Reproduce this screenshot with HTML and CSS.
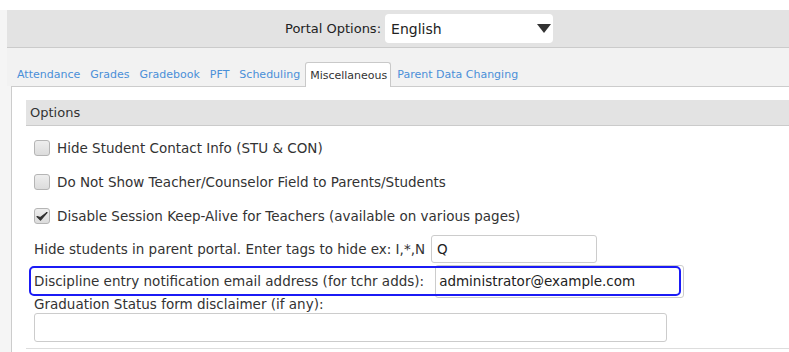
FILE: index.html
```html
<!DOCTYPE html>
<html lang="en">
<head>
  <meta charset="UTF-8">
  <title>Portal Options - Miscellaneous</title>
  <link rel="stylesheet" href="styles.css">
</head>
<body>
  <div class="page">
    <div class="portal-bar">
      <label class="portal-label" for="lang">Portal Options:</label>
      <div class="select">
        <span>English</span>
        <svg class="caret" width="14" height="9" viewBox="0 0 14 9"><path d="M0 0H14L7 9Z" fill="#333"/></svg>
      </div>
    </div>

    <div class="tabs">
      <a class="tab">Attendance</a>
      <a class="tab">Grades</a>
      <a class="tab">Gradebook</a>
      <a class="tab">PFT</a>
      <a class="tab">Scheduling</a>
      <a class="tab active">Miscellaneous</a>
      <a class="tab">Parent Data Changing</a>
    </div>

    <div class="content">
      <div class="section-head">Options</div>

      <div class="options">
        <div class="check-row"><span class="box"></span>Hide Student Contact Info (STU &amp; CON)</div>
        <div class="check-row"><span class="box"></span>Do Not Show Teacher/Counselor Field to Parents/Students</div>
        <div class="check-row"><span class="box checked"><svg width="12" height="10" viewBox="0 0 12 10"><path d="M1 5.5L4.5 9L11 1.5L4.5 6.5Z" fill="#333" stroke="#333" stroke-width="1.2" stroke-linejoin="round"/></svg></span>Disable Session Keep-Alive for Teachers (available on various pages)</div>

        <div class="field-row first">
          <span class="field-label">Hide students in parent portal. Enter tags to hide ex: I,*,N</span>
          <div class="input tags">Q</div>
        </div>

        <div class="field-row focused">
          <span class="field-label">Discipline entry notification email address (for tchr adds):</span>
          <div class="input email">administrator@example.com</div>
        </div>

        <div class="field-label grad">Graduation Status form disclaimer (if any):</div>
        <div class="input wide"></div>
      </div>
      <div class="section-foot"></div>
    </div>
  </div>
</body>
</html>
```

FILE: styles.css
```css
body {
  margin: 0;
  background-color: #fff;
  font-family: "DejaVu Sans", sans-serif;
  font-size: 13.5px;
  color: #333;
}
.page {
  margin-top: 10px;
  padding-left: 7px;
  background-color: #f5f5f5;
  height: 342px;
  overflow: hidden;
}
.portal-bar {
  height: 37px;
  background-color: #e3e3e3;
  border-bottom: 1px solid #cbcbcb;
  display: flex;
  align-items: center;
  gap: 4px;
  padding-left: 278px;
}
.portal-label {
  font-size: 13px;
  color: #222;
}
.select {
  width: 160px;
  height: 29px;
  background-color: #fff;
  border-radius: 4px;
  display: flex;
  align-items: center;
  justify-content: space-between;
  padding: 0 2px 0 6px;
  font-size: 14px;
  color: #222;
}
.tabs {
  background-color: #f2f2f2;
  height: 38px;
  display: flex;
  align-items: flex-end;
  padding-left: 5px;
}
.tab {
  color: #4a8fd8;
  font-size: 11px;
  padding: 0 5px 5px 5px;
  cursor: pointer;
}
.tab.active {
  color: #333;
  background-color: #fff;
  border: 1px solid #c9c9c9;
  border-bottom: none;
  border-radius: 3px 3px 0 0;
  padding: 6px 3px 5px 4px;
  margin: 0 1px -1px 0;
  position: relative;
}
.content {
  margin-left: 4px;
  background-color: #fff;
  border-left: 1px solid #cccccc;
  border-top: 1px solid #cccccc;
  padding: 13px 0 0 14px;
  height: 300px;
}
.section-head {
  height: 25px;
  background-color: #e3e3e3;
  border-bottom: 1px solid #cbcbcb;
  display: flex;
  align-items: center;
  padding-left: 4px;
  font-size: 13px;
}
.options {
  padding: 14px 0 0 8px;
  display: flex;
  flex-direction: column;
}
.check-row {
  display: flex;
  align-items: center;
  gap: 7px;
  height: 16px;
  margin-bottom: 18px;
}
.box {
  width: 16px;
  height: 16px;
  border: 1px solid #b5b5b5;
  border-radius: 3px;
  background: linear-gradient(#eeeeee, #dcdcdc);
  display: flex;
  align-items: center;
  justify-content: center;
  box-sizing: border-box;
  flex: none;
}
.field-label {
  white-space: nowrap;
  flex: none;
}
.field-row {
  display: flex;
  align-items: center;
  gap: 6px;
  height: 30px;
}
.field-row.first {
  margin-top: -8px;
}
.field-row.focused {
  margin: 4px 0 0 -3px;
  padding-left: 3px;
  width: 645px;
  height: 26px;
  outline: 2px solid #1b1bf5;
  border-radius: 3px;
  gap: 11px;
}
.input {
  height: 28px;
  box-sizing: border-box;
  border: 1px solid #cccccc;
  border-radius: 3px;
  background-color: #fff;
  padding-left: 5px;
  display: flex;
  align-items: center;
  color: #222;
  flex: none;
}
.input.tags {
  width: 166px;
}
.input.email {
  width: 249px;
  height: 33px;
  padding-left: 3px;
}
.grad {
  line-height: 16px;
  margin-top: 2px;
}
.input.wide {
  width: 633px;
  height: 29px;
  margin-top: 1px;
}
.section-foot {
  border-top: 1px solid #dddddd;
  margin-top: 6px;
}
```
